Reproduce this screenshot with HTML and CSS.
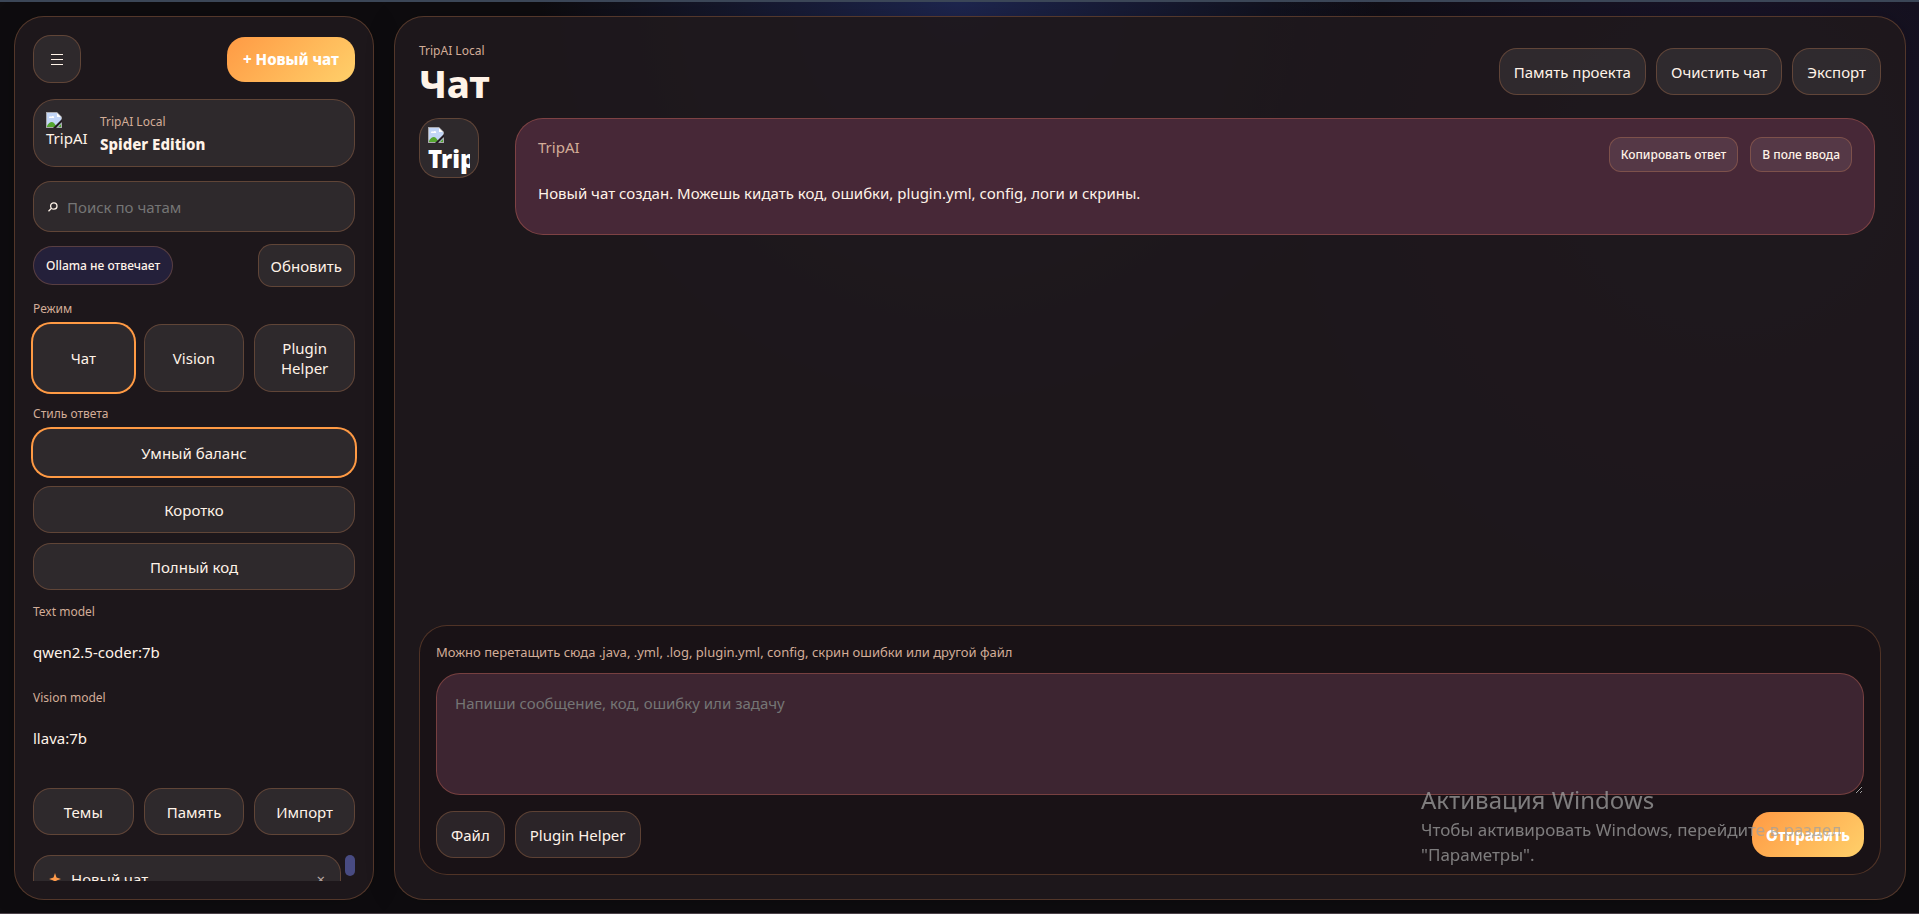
FILE: index.html
```html
<!DOCTYPE html>
<html lang="ru">
<head>
<meta charset="UTF-8">
<meta name="viewport" content="width=device-width, initial-scale=1.0">
<title>TripAI Local</title>
<link rel="stylesheet" href="styles.css">
</head>
<body>
<svg class="defs" width="0" height="0" aria-hidden="true">
  <symbol id="broken" viewBox="0 0 16 16">
    <path d="M0 0h11l5 5v11H0z" fill="#a9a9ad"/>
    <path d="M1 1h10v4h4v10H1z" fill="#c3d6f7"/>
    <path d="M11 1v4h4z" fill="#fff"/>
    <path d="M3 6c0-2 2-2 2-1 1-2 4-1 3 1z" fill="#fff"/>
    <path d="M1 15v-1c2-4 5-5 7-3l3 4z" fill="#55a630"/>
    <path d="M7 16l9-9v3l-6 6z" fill="#241c22"/>
    <path d="M12 15l3-3v3z" fill="#55a630"/>
  </symbol>
</svg>
<div class="app">
  <aside class="sidebar">
    <div class="side-top">
      <button class="btn icon-btn" aria-label="Меню">
        <svg width="12" height="13" viewBox="0 0 12 13"><path d="M0 1.500h12M0 6.500h12M0 11.500h12" stroke="currentColor" stroke-width="1.200"/></svg>
      </button>
      <button class="btn primary new-chat">+ Новый чат</button>
    </div>

    <div class="brand">
      <div class="brand-logo">
        <svg width="16" height="16"><use href="#broken"/></svg>
        <span>TripAI</span>
      </div>
      <div class="brand-text">
        <span class="muted">TripAI Local</span>
        <strong>Spider Edition</strong>
      </div>
    </div>

    <label class="search">
      <svg width="10" height="10" viewBox="0 0 10 10" fill="none" stroke="currentColor" stroke-width="1.300"><circle cx="5.800" cy="4" r="3.200"/><path d="M3.500 6.300L.5 9.300"/></svg>
      <input type="search" placeholder="Поиск по чатам" aria-label="Поиск по чатам">
    </label>

    <div class="status-row">
      <span class="status">Ollama не отвечает</span>
      <button class="btn refresh">Обновить</button>
    </div>

    <div class="group">
      <span class="muted">Режим</span>
      <div class="three modes">
        <button class="btn active">Чат</button>
        <button class="btn">Vision</button>
        <button class="btn">Plugin Helper</button>
      </div>
    </div>

    <div class="group">
      <span class="muted">Стиль ответа</span>
      <div class="stack">
        <button class="btn active">Умный баланс</button>
        <button class="btn">Коротко</button>
        <button class="btn">Полный код</button>
      </div>
    </div>

    <div class="models">
      <span class="muted">Text model</span>
      <p>qwen2.5-coder:7b</p>
      <span class="muted">Vision model</span>
      <p>llava:7b</p>
    </div>

    <div class="three tools">
      <button class="btn">Темы</button>
      <button class="btn">Память</button>
      <button class="btn">Импорт</button>
    </div>

    <div class="chats">
      <div class="chat-item">
        <svg width="12" height="12" viewBox="0 0 12 12"><path d="M6 0l1.500 4.500L12 6 7.500 7.500 6 12 4.500 7.500 0 6l4.500-1.500z" fill="#ff9a4a"/></svg>
        <span class="chat-name">Новый чат</span>
        <button class="close" aria-label="Удалить">×</button>
      </div>
      <div class="scroll-thumb"></div>
    </div>
  </aside>

  <main class="main">
    <header class="header">
      <div class="title">
        <span class="muted">TripAI Local</span>
        <h1>Чат</h1>
      </div>
      <div class="actions">
        <button class="btn">Память проекта</button>
        <button class="btn">Очистить чат</button>
        <button class="btn">Экспорт</button>
      </div>
    </header>

    <section class="messages">
      <article class="message">
        <div class="avatar">
          <svg width="16" height="16"><use href="#broken"/></svg>
          <span>TripAI</span>
        </div>
        <div class="bubble">
          <div class="bubble-head">
            <span class="author">TripAI</span>
            <div class="bubble-actions">
              <button class="btn small">Копировать ответ</button>
              <button class="btn small">В поле ввода</button>
            </div>
          </div>
          <p>Новый чат создан. Можешь кидать код, ошибки, plugin.yml, config, логи и скрины.</p>
        </div>
      </article>
    </section>

    <form class="composer" onsubmit="return false">
      <label class="hint" for="prompt">Можно перетащить сюда .java, .yml, .log, plugin.yml, config, скрин ошибки или другой файл</label>
      <textarea id="prompt" placeholder="Напиши сообщение, код, ошибку или задачу"></textarea>
      <div class="composer-row">
        <button type="button" class="btn">Файл</button>
        <button type="button" class="btn">Plugin Helper</button>
        <button type="submit" class="btn primary send">Отправить</button>
      </div>
    </form>
  </main>
</div>

<div class="watermark">
  <div class="watermark-title">Активация Windows</div>
  <div>Чтобы активировать Windows, перейдите в раздел "Параметры".</div>
</div>
</body>
</html>
```
FILE: styles.css
```css
* {
  box-sizing: border-box;
}

:root {
  --text: #fff3e8;
  --muted: #d3ad98;
  --line: rgba(255, 160, 90, 0.24);
  --soft: rgba(255, 250, 255, 0.08);
  --accent: #ff9a44;
}

body {
  margin: 0;
  height: 100vh;
  overflow: hidden;
  border-top: 2px solid #3b4657;
  border-bottom: 1px solid #4a4148;
  background:
    radial-gradient(circle at 50% 0, rgba(50, 70, 160, 0.45), transparent 420px),
    radial-gradient(circle at 90% 18%, rgba(50, 38, 100, 0.4), transparent 480px),
    #0e0c0f;
  color: var(--text);
  font-family: "Segoe UI", "Noto Sans", "Open Sans", sans-serif;
  font-size: 15px;
  line-height: 20px;
}

button,
input,
textarea {
  font: inherit;
  color: inherit;
}

p,
h1 {
  margin: 0;
}

.defs {
  position: absolute;
}

.app {
  display: grid;
  grid-template-columns: 360px minmax(0, 1fr);
  gap: 20px;
  height: 100%;
  padding: 14px 13px 13px 14px;
}

.sidebar,
.main {
  display: flex;
  flex-direction: column;
  min-height: 0;
  border: 1px solid var(--line);
  border-radius: 30px;
  background: rgba(31, 24, 28, 0.95);
  box-shadow: 0 0 30px rgba(0, 0, 0, 0.2);
}

.sidebar {
  padding: 18px;
}

.main {
  padding: 24px;
}

.muted {
  display: block;
  color: var(--muted);
  font-size: 12px;
  line-height: 16px;
}

/* Buttons */
.btn {
  min-height: 47px;
  padding: 0 14px;
  border: 1px solid var(--line);
  border-radius: 18px;
  background: var(--soft);
  cursor: pointer;
}

.btn.active {
  border-color: transparent;
  box-shadow: 0 0 0 2px var(--accent);
}

.btn.primary {
  min-height: 45px;
  border: 0;
  background: linear-gradient(135deg, #ff9a44, #ffd06a);
  color: #fff;
  font-weight: 800;
}

.btn.new-chat {
  min-width: 128px;
}

.btn.small {
  min-height: 35px;
  padding: 0 11px;
  border-radius: 12px;
  font-size: 12px;
  font-weight: 500;
}

.icon-btn {
  display: grid;
  place-items: center;
  width: 48px;
  height: 48px;
  padding: 0;
}

/* Sidebar */
.side-top,
.status-row {
  display: flex;
  align-items: center;
  justify-content: space-between;
}

.brand {
  display: flex;
  gap: 14px;
  height: 68px;
  margin-top: 16px;
  padding: 12px;
  border: 1px solid var(--line);
  border-radius: 22px;
  background: var(--soft);
}

.brand-logo {
  width: 40px;
}

.brand-logo svg,
.brand-logo span,
.avatar svg,
.avatar span {
  display: block;
}

.brand-text {
  padding-top: 2px;
}

.brand-text strong {
  display: block;
  margin-top: 4px;
  font-weight: 800;
}

.search {
  display: flex;
  align-items: center;
  gap: 9px;
  height: 51px;
  margin-top: 14px;
  padding: 0 14px;
  border: 1px solid var(--line);
  border-radius: 18px;
  background: var(--soft);
}

.search input {
  flex: 1;
  min-width: 0;
  padding: 0;
  border: 0;
  outline: 0;
  background: none;
}

::placeholder {
  color: #757575;
  opacity: 1;
}

.status-row {
  margin-top: 12px;
}

.status {
  padding: 9px 12px;
  border: 1px solid var(--line);
  border-radius: 20px;
  background: #24203a;
  font-size: 12px;
  font-weight: 500;
  line-height: 19px;
}

.btn.refresh {
  min-height: 43px;
  padding: 0 12px;
  border-radius: 14px;
}

.group {
  margin-top: 14px;
}

.group .muted {
  margin-bottom: 7px;
}

.three {
  display: grid;
  grid-template-columns: repeat(3, minmax(0, 1fr));
  gap: 10px;
}

.modes .btn {
  min-height: 68px;
}

.stack {
  display: grid;
  gap: 10px;
}

.models {
  margin-top: 14px;
}

.models p {
  margin: 22px 0 28px;
}

.tools {
  margin-top: 12px;
}

.chats {
  display: flex;
  flex: 1;
  gap: 4px;
  min-height: 0;
  margin-top: 20px;
  overflow: hidden;
}

.chat-item {
  display: flex;
  flex: 1;
  align-items: center;
  gap: 10px;
  height: 48px;
  padding: 0 15px;
  border: 1px solid var(--line);
  border-radius: 18px;
  background: var(--soft);
}

.chat-name {
  flex: 1;
}

.close {
  padding: 0;
  border: 0;
  background: none;
  color: #b9a9a4;
}

.scroll-thumb {
  width: 10px;
  height: 21px;
  border-radius: 5px;
  background: #484b82;
}

/* Chat */
.header {
  display: flex;
  align-items: flex-start;
  justify-content: space-between;
  height: 77px;
}

.title {
  padding-top: 2px;
}

.header h1 {
  font-size: 38px;
  font-weight: 800;
  line-height: 48px;
}

.actions {
  display: flex;
  gap: 10px;
  margin-top: 7px;
}

.messages {
  flex: 1;
  min-height: 0;
  padding-right: 6px;
}

.message {
  display: flex;
  gap: 36px;
}

.avatar {
  width: 60px;
  height: 60px;
  padding: 8px;
  border: 1px solid var(--line);
  border-radius: 20px;
  background: var(--soft);
  overflow: hidden;
}

.avatar span {
  overflow: hidden;
  color: #fff;
  font-size: 24px;
  font-weight: 900;
  line-height: 32px;
}

.bubble {
  flex: 1;
  height: 117px;
  padding: 18px 22px;
  border: 1px solid rgba(255, 130, 100, 0.3);
  border-radius: 28px;
  background: #472837;
}

.bubble-head {
  display: flex;
  justify-content: space-between;
}

.author {
  color: var(--muted);
}

.bubble-actions {
  display: flex;
  gap: 12px;
}

.bubble p {
  margin-top: 11px;
}

.composer {
  padding: 16px;
  border: 1px solid var(--line);
  border-radius: 28px;
  background: #191216;
}

.hint {
  display: block;
  color: var(--muted);
  font-size: 13px;
  line-height: 20px;
}

.composer textarea {
  display: block;
  width: 100%;
  height: 122px;
  margin: 11px 0 16px;
  padding: 19px 18px;
  border: 1px solid rgba(255, 130, 100, 0.3);
  border-radius: 24px;
  outline: 0;
  background: #3d2531;
  resize: vertical;
}

.composer-row {
  display: flex;
  align-items: center;
  gap: 10px;
}

.send {
  margin-left: auto;
}

/* System notice over the page */
.watermark {
  position: fixed;
  right: 68px;
  bottom: 47px;
  width: 430px;
  color: rgba(160, 160, 160, 0.75);
  font-size: 17px;
  line-height: 25px;
  pointer-events: none;
}

.watermark-title {
  font-size: 24px;
  line-height: 34px;
}
```
